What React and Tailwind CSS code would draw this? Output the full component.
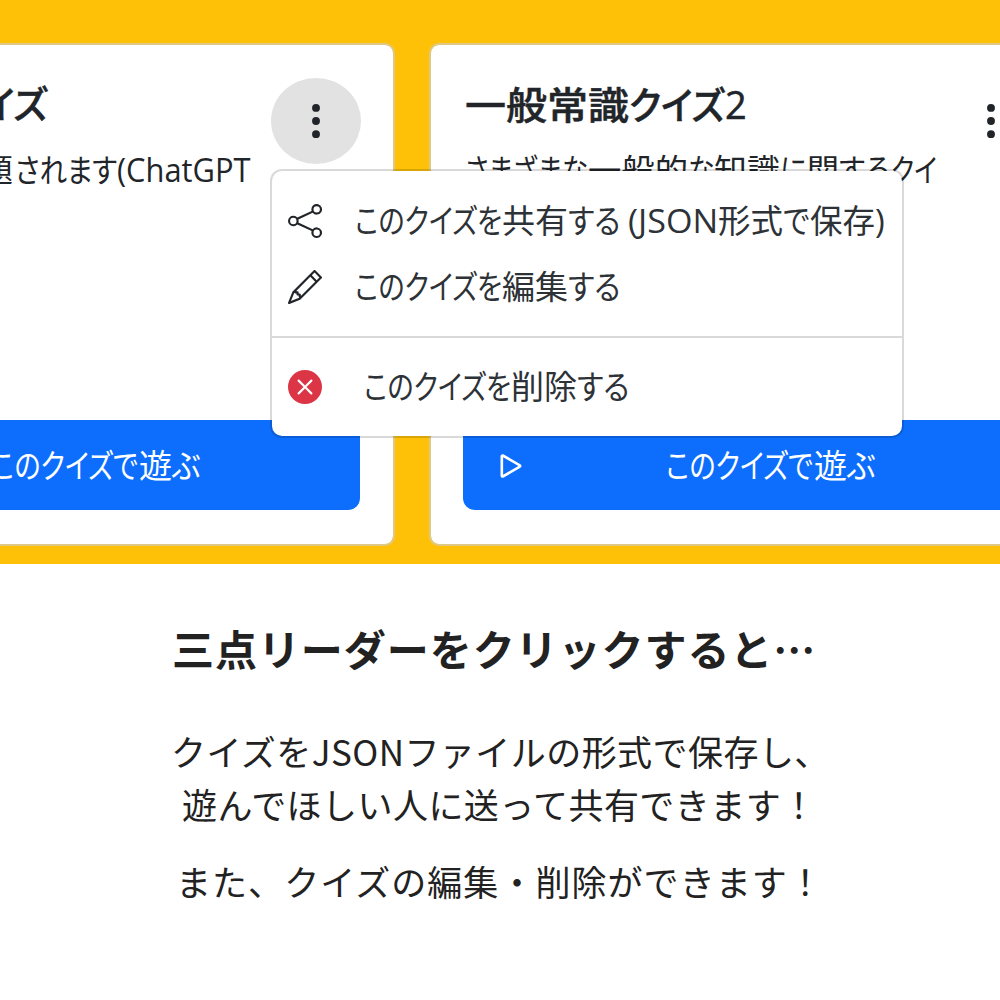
import { useLayoutEffect, useRef, useState } from "react";
import { BsShare, BsPencil, BsXCircleFill, BsPlay, BsThreeDotsVertical } from "react-icons/bs";

// A run of text condensed or widened to a given advance width.
function Run({ w, children }) {
  const ref = useRef(null);
  const [scale, setScale] = useState(1);
  useLayoutEffect(() => {
    const fit = () => setScale(w / ref.current.offsetWidth);
    fit();
    document.fonts.ready.then(fit);
  }, [w]);
  return (
    <span className="inline-block shrink-0 whitespace-nowrap" style={{ width: w }}>
      <span ref={ref} className="inline-block origin-left" style={{ transform: `scaleX(${scale})` }}>
        {children}
      </span>
    </span>
  );
}

function Line({ runs, className }) {
  return (
    <span className={`flex whitespace-nowrap font-[Open_Sans,Noto_Sans_CJK_JP,sans-serif] [font-feature-settings:'palt'] ${className}`}>
      {runs.map(([text, w], i) => (
        <Run key={i} w={w}>{text}</Run>
      ))}
    </span>
  );
}

const gap = (w) => ["\u00a0", w];

const playRuns = [["このクイズで", 147], gap(1), ["遊", 33], ["ぶ", 28]];

function QuizCard({ className, children }) {
  return (
    <section className={`h-[503px] shrink-0 rounded-[10px] border-2 border-[#dfc786] bg-white bg-clip-padding ${className}`}>
      {children}
    </section>
  );
}

function MenuItem({ icon, runs, className }) {
  return (
    <li className={`flex h-[66px] items-center ${className}`}>
      {icon}
      <Line runs={runs} className="text-[33px] leading-[48px] text-[#2d3237]" />
    </li>
  );
}

export default function App() {
  return (
    <main className="h-[1000px] w-[1000px] overflow-hidden bg-white text-[#212529]">
      <div className="relative flex h-[564px] gap-[34px] overflow-hidden bg-[#ffc107] pt-[43px]">
        <QuizCard className="w-[395px] rounded-l-none border-l-0">
          <div className="flex h-[375px] justify-between">
            <div>
              <Line
                runs={[["イズ", 66]]}
                className="-ml-[18px] mt-[30px] text-[38px] leading-[56px] font-medium [-webkit-text-stroke:0.5px_#212529]"
              />
              <Line
                runs={[["題", 32], gap(2), ["されます", 102], ["(ChatGPT", 134]]}
                className="-ml-[19px] mt-[15px] text-[32px] leading-[48px]"
              />
            </div>
            <div className="mr-[32px] mt-[33px] flex h-[86px] w-[90px] shrink-0 -ml-[60px] items-center justify-center rounded-[50%] bg-[#e2e2e2]">
              <BsThreeDotsVertical size={42} className="-ml-[1px]" />
            </div>
          </div>
          <div className="flex h-[90px] w-[360px] items-center rounded-br-xl bg-[#0d6efd] text-white">
            <Line runs={playRuns} className="-ml-[9px] mt-[2px] text-[33px] leading-[48px]" />
          </div>
        </QuizCard>

        <QuizCard className="w-[660px]">
          <div className="flex h-[375px]">
            <div className="w-[539px] shrink-0 pl-[34px]">
              <Line
                runs={[["一般常識", 164], ["クイズ", 96], ["2", 22]]}
                className="mt-[31px] text-[38px] leading-[56px] font-medium [-webkit-text-stroke:0.5px_#212529]"
              />
              <Line
                runs={[["さまざまな", 123], ["一般的", 100], ["な", 26], ["知識", 66], ["に", 27], ["関", 32], ["する", 52], ["クイ", 46]]}
                className="mt-[14px] text-[32px] leading-[48px]"
              />
            </div>
            <BsThreeDotsVertical size={42} className="mt-[55px] shrink-0" />
          </div>
          <div className="ml-[32px] flex h-[90px] items-center rounded-l-xl bg-[#0d6efd] text-white">
            <BsPlay size={42} className="ml-[27px] mt-[1px] shrink-0" />
            <Line runs={playRuns} className="ml-[134px] mt-[2px] text-[33px] leading-[48px]" />
          </div>
        </QuizCard>

        <ul className="absolute left-[270px] top-[169px] h-[269px] w-[634px] rounded-[12px] border-2 border-black/15 bg-white bg-clip-padding pt-[17px]">
          <MenuItem
            className="pl-[16px] gap-[33px]"
            icon={<BsShare size={34} className="shrink-0" />}
            runs={[["このクイズを", 147], ["共有", 66], ["する", 52], gap(8), ["(JSON", 90], ["形式", 65], ["で", 27], ["保存", 65], [")", 10]]}
          />
          <MenuItem
            className="pl-[16px] gap-[33px]"
            icon={<BsPencil size={34} className="shrink-0" />}
            runs={[["このクイズを", 147], ["編集", 66], ["する", 52]]}
          />
          <li className="mt-[16px] h-[2px] bg-black/15" />
          <MenuItem
            className="mt-[16px] pl-[16px] gap-[42px]"
            icon={<BsXCircleFill size={34} className="shrink-0 text-[#dc3545]" />}
            runs={[["このクイズを", 147], ["削除", 66], ["する", 52]]}
          />
        </ul>
      </div>

      <article className="font-[Noto_Sans_CJK_JP,sans-serif] text-[#222222]">
        <h1 className="mt-[52px] pl-[172px] text-[42px] leading-[64px] font-bold tracking-[0.95px] whitespace-nowrap">
          三点リーダーをクリックすると…
        </h1>
        <p className="mt-[44px] pl-[171px] text-[35px] leading-[53px] tracking-[0.45px] whitespace-nowrap">
          クイズをJSONファイルの形式で保存し、
        </p>
        <p className="pl-[182px] text-[35px] leading-[53px] tracking-[0.45px] whitespace-nowrap">
          遊んでほしい人に送って共有できます！
        </p>
        <p className="mt-[24px] pl-[176px] text-[35px] leading-[53px] tracking-[1.05px] whitespace-nowrap">
          また、クイズの編集・削除ができます！
        </p>
      </article>
    </main>
  );
}
